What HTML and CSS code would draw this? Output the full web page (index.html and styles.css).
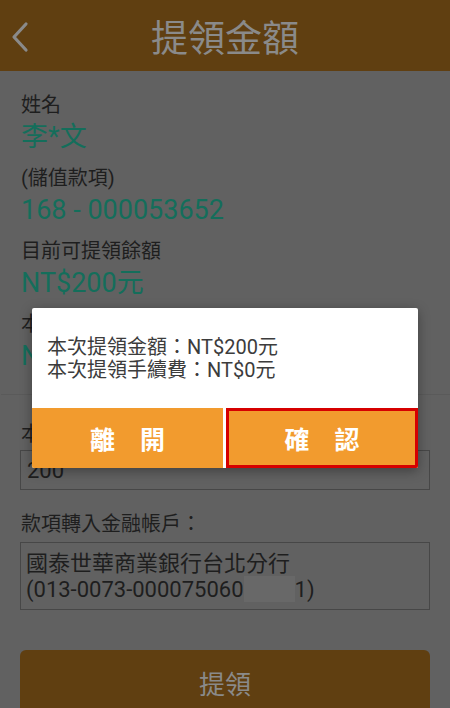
FILE: index.html
```html
<!DOCTYPE html>
<html lang="zh-Hant">
<head>
<meta charset="utf-8">
<title>提領金額</title>
<link rel="stylesheet" href="styles.css">
</head>
<body>
<div class="page">
  <header class="topbar">
    <span class="back">
      <svg width="20" height="32" viewBox="0 0 20 32"><path d="M16 3 L4 16 L16 29" fill="none" stroke="#8a8a8a" stroke-width="3.2" stroke-linecap="round" stroke-linejoin="round"/></svg>
    </span>
    <h1 class="title">提領金額</h1>
    <span class="spacer"></span>
  </header>
  <main class="content">
    <div class="group">
      <div class="label">姓名</div>
      <div class="value">李*文</div>
    </div>
    <div class="group">
      <div class="label">(儲值款項)</div>
      <div class="value">168 - 000053652</div>
    </div>
    <div class="group">
      <div class="label">目前可提領餘額</div>
      <div class="value">NT$200元</div>
    </div>
    <div class="group">
      <div class="label">本次可提領金額</div>
      <div class="value">NT$200元</div>
    </div>
    <hr class="sep">
    <div class="label">本次提領金額：</div>
    <div class="input">200</div>
    <div class="label label-acct">款項轉入金融帳戶：</div>
    <div class="acct">
      <div>國泰世華商業銀行台北分行</div>
      <div>(013-0073-000075060<span class="mask"></span>1)</div>
    </div>
    <div class="submit">提領</div>
  </main>
  <div class="dialog">
    <div class="dialog-body">
      <div>本次提領金額：NT$200元</div>
      <div>本次提領手續費：NT$0元</div>
    </div>
    <div class="dialog-actions">
      <div class="btn">離　開</div>
      <div class="btn btn-focus">確　認</div>
    </div>
  </div>
</div>
</body>
</html>
```
FILE: styles.css
```css
html, body {
  margin: 0;
  padding: 0;
}
body {
  background: #616161;
  font-family: Roboto, "Noto Sans CJK TC", sans-serif;
  width: 450px;
  height: 708px;
  overflow: hidden;
}
.page {
  position: relative;
  width: 450px;
  height: 708px;
}
.topbar {
  height: 71px;
  background: #603f11;
  display: grid;
  grid-template-columns: 60px 1fr 60px;
  align-items: center;
}
.back {
  display: flex;
  align-items: center;
  padding-left: 10px;
  padding-top: 2px;
}
.title {
  margin: 0;
  text-align: center;
  font-weight: normal;
  font-size: 37px;
  line-height: 40px;
  color: #8a8a8a;
  font-family: "Noto Sans CJK TC", sans-serif;
}
.content {
  padding: 22px 20px 0 21px;
}
.group {
  margin-bottom: 14px;
}
.label {
  font-size: 20px;
  line-height: 24px;
  color: #1e1e1e;
}
.value {
  margin-top: 5px;
  font-size: 27px;
  line-height: 30px;
  color: #146e5b;
}
.sep {
  border: 0;
  height: 1px;
  background: #5a5a5a;
  margin: 23px -21px 27px -20px;
}
.input {
  margin-top: 4px;
  height: 38px;
  border: 1px solid #474747;
  display: flex;
  align-items: center;
  padding-left: 6px;
  font-size: 22px;
  color: #1e1e1e;
  margin-left: -1px;
}
.label-acct {
  margin-top: 22px;
}
.acct {
  margin-top: 6px;
  margin-left: -1px;
  border: 1px solid #474747;
  padding: 9px 5px 7px 5px;
  font-size: 22px;
  line-height: 24px;
  color: #1e1e1e;
}
.mask {
  display: inline-block;
  width: 51px;
  height: 26px;
  background: #686868;
  vertical-align: -5px;
}
.submit {
  margin-top: 40px;
  margin-left: -1px;
  height: 64px;
  border-radius: 6px;
  background: #603f11;
  color: #8a8a8a;
  font-size: 26px;
  display: flex;
  justify-content: center;
  padding-top: 14px;
  box-sizing: border-box;
  font-family: "Noto Sans CJK TC", sans-serif;
}
.dialog {
  position: absolute;
  left: 32px;
  top: 308px;
  width: 386px;
  background: #fff;
  border-radius: 2px;
  box-shadow: 0 3px 12px rgba(0, 0, 0, 0.35);
  overflow: hidden;
}
.dialog-body {
  padding: 28px 15px 26px 15px;
  font-size: 20px;
  line-height: 23px;
  color: #3c3c3c;
}
.dialog-actions {
  display: grid;
  grid-template-columns: 191px 192px;
  column-gap: 3px;
  height: 60px;
}
.btn {
  background: #f29b2e;
  color: #fff;
  font-weight: bold;
  font-size: 25px;
  display: flex;
  align-items: center;
  justify-content: center;
  font-family: "Noto Sans CJK TC", sans-serif;
}
.btn-focus {
  border: 3px solid #d60000;
}
```
